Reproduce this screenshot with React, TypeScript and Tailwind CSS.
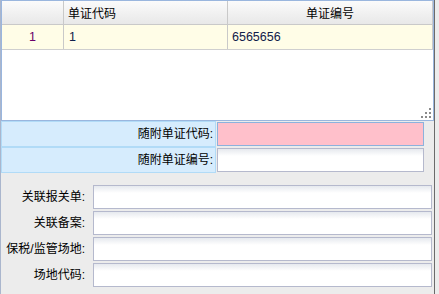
const font = "font-['Liberation_Sans','Noto_Sans_CJK_SC',sans-serif]";

const inputCls =
  "h-[24px] border border-[#b5b9cd] bg-[linear-gradient(to_bottom,#e6e9ee,#ffffff_7px)]";

function Grip() {
  const dots = [
    [8, 0],
    [4, 4],
    [8, 4],
    [0, 8],
    [4, 8],
    [8, 8],
  ];
  return (
    <svg className="absolute right-[2px] bottom-[2px]" width="10" height="10" viewBox="0 0 10 10">
      {dots.map(([x, y], i) => (
        <rect key={i} x={x} y={y} width="2" height="2" fill="#8a8a8a" />
      ))}
    </svg>
  );
}

function FormRow({ label }: { label: string }) {
  return (
    <div className="flex h-[24px] items-center">
      <span className="w-[84px] text-right text-[12px] leading-none text-black">{label}</span>
      <div className={`${inputCls} ml-[8px] w-[339px]`} />
    </div>
  );
}

export default function App() {
  return (
    <div className={`h-[294px] w-[439px] bg-[#ececec] ${font}`}>
      <div className="h-[294px] w-[435px] border-l border-r border-l-[#aab6cd] border-r-[#6b6b6b] bg-[#ececec]">
        {/* grid */}
        <div className="relative h-[121px] border border-[#9ab6de] bg-white">
          <div className="flex h-[24px] border-b border-[#c9c9c9] bg-[linear-gradient(to_bottom,#fbfbfb,#e8e8e8)] text-[12px] text-black">
            <div className="w-[62px] border-r border-[#c9c9c9]" />
            <div className="flex w-[164px] items-center border-r border-[#c9c9c9] pl-[4px] pt-[2px] leading-none">
              单证代码
            </div>
            <div className="flex w-[205px] items-center justify-center border-r border-[#c9c9c9] pt-[2px] leading-none">
              单证编号
            </div>
          </div>
          <div className="flex h-[25px] border-b border-[#cfcfcf] bg-[#fffde7] text-[12.5px] leading-none">
            <div className="flex w-[62px] items-center justify-center border-r border-[#c9c9c9] text-[#6a006a]">
              1
            </div>
            <div className="flex w-[164px] items-center border-r border-[#c9c9c9] pl-[5px] text-[#10204a]">
              1
            </div>
            <div className="flex w-[205px] items-center border-r border-[#c9c9c9] pl-[4px] text-[#10204a]">
              6565656
            </div>
          </div>
          <Grip />
        </div>

        {/* attached document rows */}
        <div className="flex flex-col">
          {["随附单证代码:", "随附单证编号:"].map((label, i) => (
            <div key={label} className="flex h-[26px] items-center">
              <div className="flex h-[26px] w-[215px] items-center justify-end border border-[#b1dbf7] bg-[#d6ecfd] pr-[2px] text-[12px] leading-none text-black">
                {label}
              </div>
              {i === 0 ? (
                <div className="ml-[1px] h-[24px] w-[207px] border border-[#8cb2dd] bg-[#ffc0cb]" />
              ) : (
                <div className={`${inputCls} ml-[1px] w-[207px]`} />
              )}
            </div>
          ))}
        </div>

        {/* related fields */}
        <div className="flex flex-col gap-[2px] pt-[12px]">
          <FormRow label="关联报关单:" />
          <FormRow label="关联备案:" />
          <FormRow label="保税/监管场地:" />
          <FormRow label="场地代码:" />
        </div>
      </div>
    </div>
  );
}
